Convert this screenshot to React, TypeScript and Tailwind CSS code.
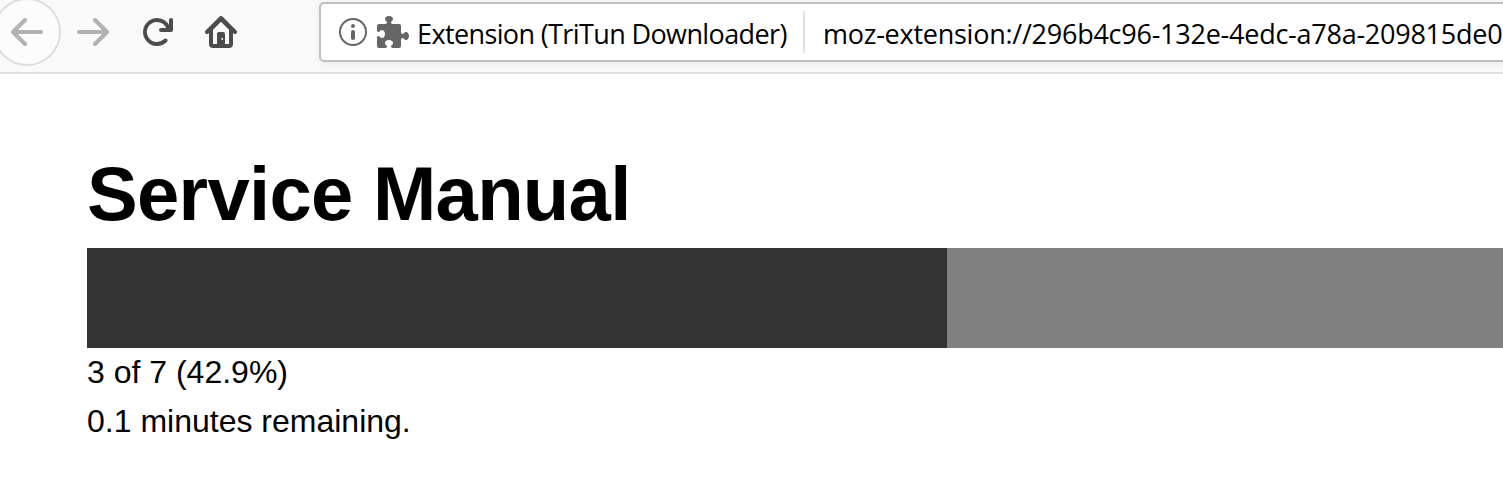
const BACK =
  "M15 7H3.414l4.293-4.293a1 1 0 0 0-1.414-1.414l-6 6a1 1 0 0 0 0 1.414l6 6a1 1 0 0 0 1.414-1.414L3.414 9H15a1 1 0 0 0 0-2z";
const RELOAD =
  "M15 1a1 1 0 0 0-1 1v2.418A6.995 6.995 0 1 0 8 15a6.954 6.954 0 0 0 4.95-2.05 1 1 0 0 0-1.414-1.414A5.019 5.019 0 1 1 12.549 6H10a1 1 0 0 0 0 2h5a1 1 0 0 0 1-1V2a1 1 0 0 0-1-1z";
const HOME =
  "M15.707 7.293l-7-7a1 1 0 0 0-1.414 0l-7 7a1 1 0 0 0 1.414 1.414L2 8.414V14a2 2 0 0 0 2 2h8a2 2 0 0 0 2-2V8.414l.293.293a1 1 0 0 0 1.414-1.414zM8 2.9l4 4V14h-2V9a1 1 0 0 0-1-1H7a1 1 0 0 0-1 1v5H4V6.9zM8.25 11h.75v1h-.75z";
const PUZZLE =
  "M14.5 8c-.971 0-1 1-1.75 1a.765.765 0 0 1-.75-.75V5a1 1 0 0 0-1-1H7.75A.765.765 0 0 1 7 3.25c0-.75 1-.779 1-1.75C8 .635 7.1 0 6 0S4 .635 4 1.5c0 .971 1 1 1 1.75a.765.765 0 0 1-.75.75H1a1 1 0 0 0-1 1v2.25A.765.765 0 0 0 .75 8c.75 0 .779-1 1.75-1C3.365 7 4 7.9 4 9s-.635 2-1.5 2c-.971 0-1-1-1.75-1a.765.765 0 0 0-.75.75V15a1 1 0 0 0 1 1h3.25a.765.765 0 0 0 .75-.75c0-.75-1-.779-1-1.75 0-.865.9-1.5 2-1.5s2 .635 2 1.5c0 .971-1 1-1 1.75a.765.765 0 0 0 .75.75H11a1 1 0 0 0 1-1v-3.25a.765.765 0 0 1 .75-.75c.75 0 .779 1 1.75 1 .865 0 1.5-.9 1.5-2s-.635-2-1.5-2z";

function Icon({ d, className }: { d: string; className: string }) {
  return (
    <svg viewBox="0 0 16 16" className={`size-8 shrink-0 ${className}`} fill="currentColor" fillRule="evenodd">
      <path d={d} />
    </svg>
  );
}

function Toolbar() {
  return (
    <header className="flex h-[74px] items-start overflow-hidden border-b-2 border-[#e1e1e1] bg-[#f9f9f9]">
      <button className="-mt-[2px] -ml-[7px] flex size-[68px] shrink-0 items-center justify-center rounded-full border-2 border-[#dcdcdc] bg-[#fcfcfc]">
        <Icon d={BACK} className="text-[#b1b1b1]" />
      </button>
      <div className="mt-4 ml-4 flex w-[242px] shrink-0 gap-8">
        <Icon d={BACK} className="-scale-x-100 text-[#b1b1b1]" />
        <Icon d={RELOAD} className="text-[#4c4c4c]" />
        <Icon d={HOME} className="text-[#4c4c4c]" />
      </div>
      <div className="mt-[2px] flex h-[60px] w-[1300px] shrink-0 items-center rounded-[5px] border-2 border-[#bfbfbf] bg-white pl-4 font-['Open_Sans','Noto_Sans',sans-serif] text-[27px] whitespace-nowrap text-black shadow-[0_2px_8px_rgba(0,0,0,0.06)]">
        <svg viewBox="0 0 32 32" className="size-8 shrink-0 text-[#666]" fill="currentColor">
          <circle cx="16" cy="16" r="13" fill="none" stroke="currentColor" strokeWidth="2" />
          <circle cx="16" cy="10" r="2" />
          <rect x="14" y="14" width="4" height="10" rx="2" />
        </svg>
        <Icon d={PUZZLE} className="ml-2 text-[#666]" />
        <span className="ml-2 w-[386px] shrink-0 pt-[5px] tracking-[-0.62px]">Extension (TriTun Downloader)</span>
        <div className="h-[42px] w-[2px] shrink-0 bg-[#e1e1e1]" />
        <span className="ml-[18px] pt-[5px] tracking-[-0.25px]">moz-extension://296b4c96-132e-4edc-a78a-209815de0</span>
      </div>
    </header>
  );
}

export default function App() {
  return (
    <div className="h-[483px] overflow-hidden bg-white font-['Liberation_Sans',Arial,sans-serif] text-black">
      <Toolbar />
      <main className="pt-[77px] pl-[87px]">
        <h1 className="text-[76px] leading-[86px] font-bold tracking-[-0.7px]">Service Manual</h1>
        <div className="mt-[11px] h-[100px] bg-[#808080]">
          <div className="h-full w-[860px] bg-[#333]" />
        </div>
        <p className="text-[32px] leading-[49px]">3 of 7 (42.9%)</p>
        <p className="text-[32px] leading-[49px]">0.1 minutes remaining.</p>
      </main>
    </div>
  );
}
